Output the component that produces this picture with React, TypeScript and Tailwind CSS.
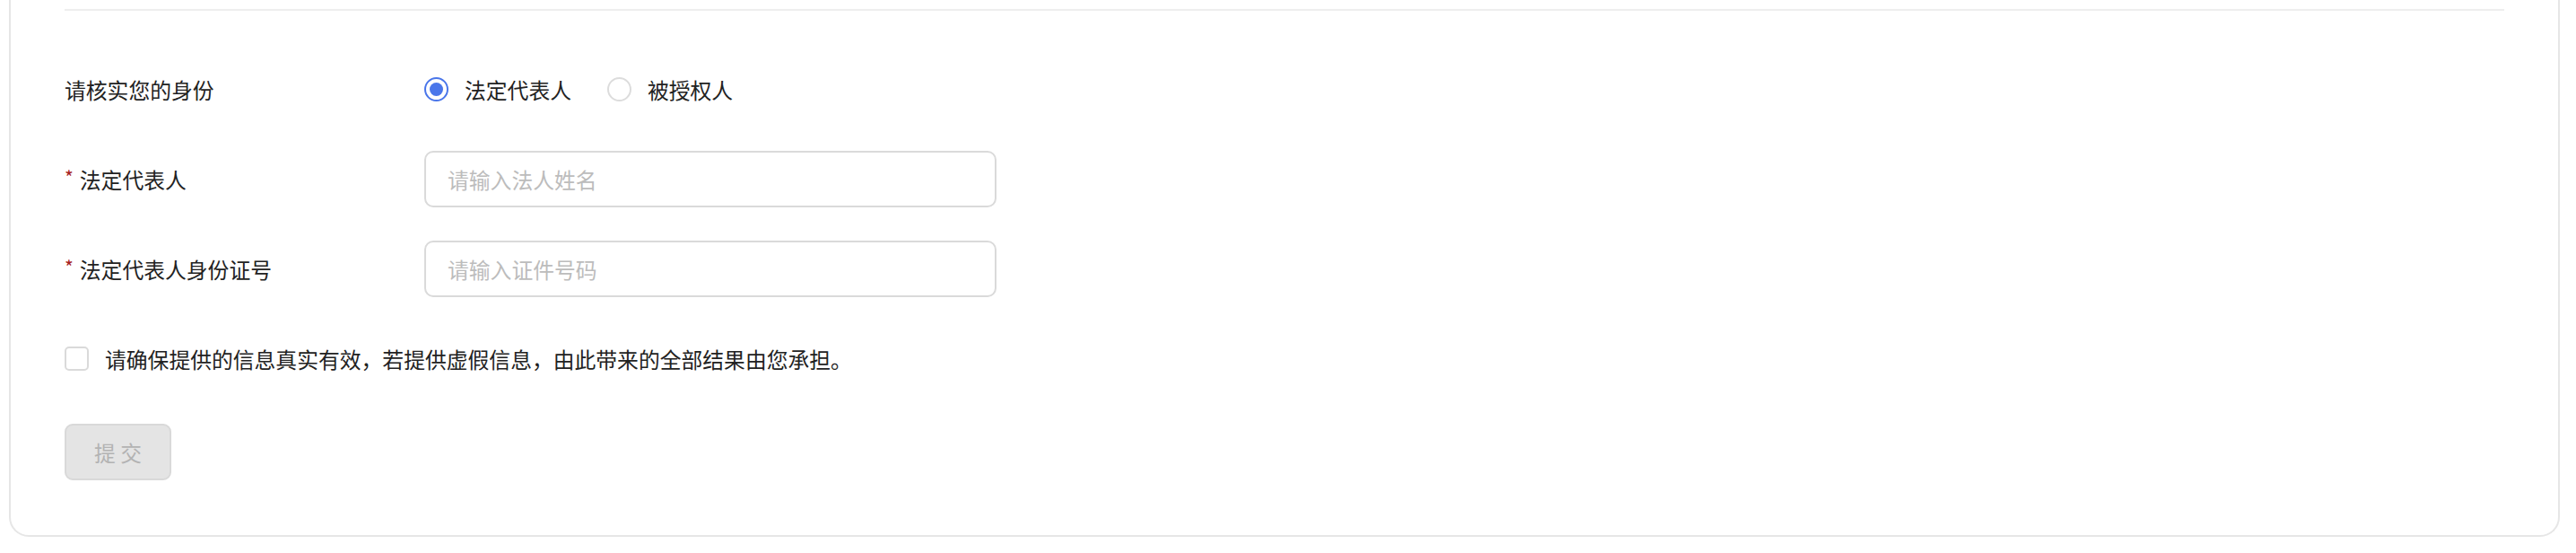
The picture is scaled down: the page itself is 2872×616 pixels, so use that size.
import { useState } from "react";

const font = "font-['Noto_Sans_CJK_SC','Noto_Sans',sans-serif]";

function Radio({ checked, label, onClick }: { checked: boolean; label: string; onClick: () => void }) {
  return (
    <button type="button" onClick={onClick} className="flex items-center">
      <span
        className={
          checked
            ? "flex h-[27px] w-[27px] items-center justify-center rounded-full border-2 border-[#4a76ea]"
            : "flex h-[27px] w-[27px] items-center justify-center rounded-full border-2 border-[#dcdcdc]"
        }
      >
        {checked && <span className="h-[15px] w-[15px] rounded-full bg-[#4a76ea]" />}
      </span>
      <span className="ml-[18px] text-[23.8px] leading-none text-[#222]">{label}</span>
    </button>
  );
}

function Field({ label, placeholder }: { label: string; placeholder: string }) {
  return (
    <div className="flex h-[63px] items-center">
      <div className="flex w-[401px] items-center">
        <span className="mr-[7px] mt-[-4px] text-[21px] leading-none text-[#a61d1d]">*</span>
        <span className="text-[23.8px] leading-none text-[#222]">{label}</span>
      </div>
      <input
        placeholder={placeholder}
        className="h-[63px] w-[638px] rounded-[10px] border-2 border-[#dadada] bg-white px-[24px] text-[23.8px] text-[#222] outline-none placeholder:text-[#bcbcbc]"
      />
    </div>
  );
}

export default function App() {
  const [role, setRole] = useState("legal");
  const [agreed, setAgreed] = useState(false);

  return (
    <div className={`h-[616px] w-full bg-white ${font}`}>
      <div className="ml-[10px] mr-[18px] h-[598px] rounded-b-[22px] border-x-2 border-b-2 border-[#e6e6e6] px-[60px] pt-[10px]">
        <div className="h-[2px] bg-[#eeeeee]" />

        <div className="mt-[56px] flex h-[63px] items-center">
          <div className="w-[401px] text-[23.8px] leading-none text-[#222]">请核实您的身份</div>
          <div className="flex items-center gap-[40px]">
            <Radio checked={role === "legal"} label="法定代表人" onClick={() => setRole("legal")} />
            <Radio checked={role === "agent"} label="被授权人" onClick={() => setRole("agent")} />
          </div>
        </div>

        <div className="mt-[37px]">
          <Field label="法定代表人" placeholder="请输入法人姓名" />
        </div>
        <div className="mt-[37px]">
          <Field label="法定代表人身份证号" placeholder="请输入证件号码" />
        </div>

        <div className="mt-[37px] flex h-[63px] items-center">
          <button
            type="button"
            onClick={() => setAgreed(!agreed)}
            className="h-[27px] w-[27px] rounded-[5px] border-2 border-[#dadada] bg-white"
          />
          <span className="ml-[18px] text-[23.8px] leading-none text-[#222]">
            请确保提供的信息真实有效，若提供虚假信息，由此带来的全部结果由您承担。
          </span>
        </div>

        <button
          type="button"
          disabled={!agreed}
          className="mt-[41px] h-[63px] w-[119px] rounded-[9px] border-2 border-[#d9d9d9] bg-[#e4e4e4] text-[23.8px] leading-none text-[#b3b3b3]"
        >
          提 交
        </button>
      </div>
    </div>
  );
}
